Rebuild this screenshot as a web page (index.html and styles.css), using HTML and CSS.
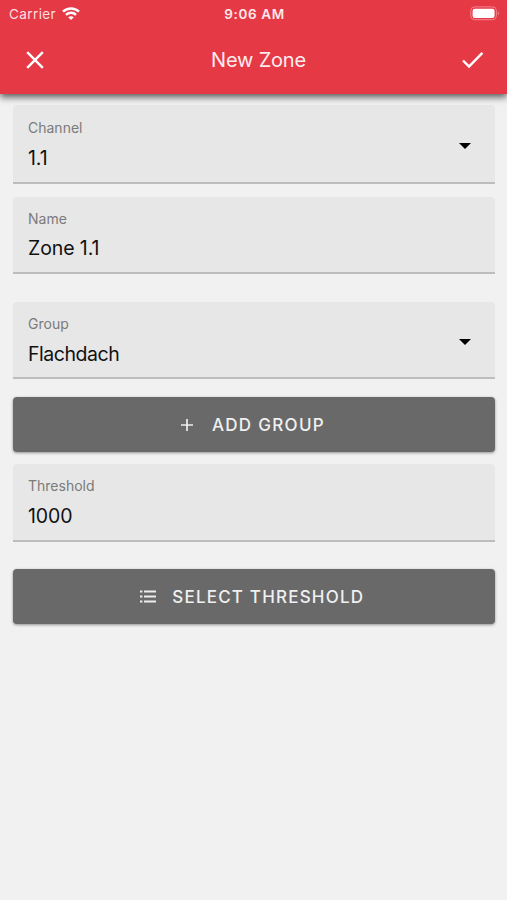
FILE: index.html
```html
<!DOCTYPE html>
<html lang="en">
<head>
<meta charset="utf-8">
<title>New Zone</title>
<link rel="stylesheet" href="styles.css">
</head>
<body>
<header class="header">
  <div class="status">
    <div class="carrier"><span>Carrier</span>
      <svg width="18" height="14" viewBox="0 0 18 14" fill="none" stroke="#fff" stroke-width="2.5"><path d="M1 4.6C5.5.3 12.5.3 17 4.6M4 7.8c2.8-2.7 7.2-2.7 10 0"/><path d="M9 13 6.2 10.3q2.8-2.3 5.6 0z" fill="#fff" stroke="none"/></svg>
    </div>
    <span class="time">9:06 AM</span>
    <svg class="battery" width="30" height="15" viewBox="0 0 30 15"><rect x=".8" y=".9" width="25.6" height="12.8" rx="3.8" fill="none" stroke="#f2858f"/><rect x="2.6" y="2.7" width="22" height="9.2" rx="2.2" fill="#fff"/><path d="M27.8 5.2q2.4 2.1 0 4.2z" fill="#f2858f"/></svg>
  </div>
  <div class="toolbar">
    <svg width="18" height="18" viewBox="0 0 18 18" fill="none" stroke="#fff" stroke-width="2.4"><path d="m1.2 1.2 15.6 15.6m0-15.6L1.2 16.8"/></svg>
    <h1 class="title">New Zone</h1>
    <svg width="22" height="18" viewBox="0 0 22 18" fill="none" stroke="#fff" stroke-width="2.4"><path d="m1 9.5 6 6L20.4 1.8"/></svg>
  </div>
</header>
<main class="form">
  <div class="field channel">
    <div class="text"><span class="label">Channel</span><span class="value">1.1</span></div>
    <svg class="arrow" width="12" height="6" viewBox="0 0 12 6"><path d="M0 0h12L6 6z"/></svg>
  </div>
  <div class="field name">
    <div class="text"><span class="label">Name</span><span class="value">Zone 1.1</span></div>
  </div>
  <div class="field group">
    <div class="text"><span class="label">Group</span><span class="value tight">Flachdach</span></div>
    <svg class="arrow" width="12" height="6" viewBox="0 0 12 6"><path d="M0 0h12L6 6z"/></svg>
  </div>
  <button class="button add">
    <svg width="12" height="12" viewBox="0 0 12 12" stroke="#eee" stroke-width="1.7"><path d="M6 0v12M0 6h12"/></svg>
    <span>ADD GROUP</span>
  </button>
  <div class="field threshold">
    <div class="text"><span class="label">Threshold</span><span class="value">1000</span></div>
  </div>
  <button class="button select">
    <svg width="16" height="13" viewBox="0 0 16 13" stroke="#eee" stroke-width="1.9"><path d="M0 1.5h2.4M4 1.5h12M0 6.5h2.4M4 6.5h12M0 11.5h2.4M4 11.5h12"/></svg>
    <span>SELECT THRESHOLD</span>
  </button>
</main>
</body>
</html>
```
FILE: styles.css
```css
* { box-sizing: border-box; }
body {
  margin: 0;
  height: 900px;
  background: #f1f1f1;
  font-family: Inter, "Liberation Sans", sans-serif;
  overflow: hidden;
}
svg { display: block; flex: none; }
.header {
  position: relative;
  z-index: 1;
  height: 94px;
  background: #e63946;
  color: #fff;
  box-shadow: 0 3px 7px rgba(0, 0, 0, .65);
}
.status {
  display: grid;
  grid-template-columns: 1fr auto 1fr;
  align-items: center;
  height: 27px;
  padding: 0 7px 0 9px;
  font-size: 13.5px;
}
.carrier { display: flex; align-items: center; gap: 6px; color: #fbdfe1; letter-spacing: .4px; }
.time { font-weight: 600; font-size: 13.5px; letter-spacing: .65px; color: #fde9ea; }
.battery { justify-self: end; }
.toolbar {
  display: grid;
  grid-template-columns: 18px 1fr 22px;
  align-items: center;
  height: 66px;
  padding: 0 23px 0 26px;
}
.title {
  margin: 0;
  padding-left: 11px;
  text-align: center;
  font-size: 20px;
  font-weight: 400;
  letter-spacing: -.2px;
  color: #fdecee;
}
.form { display: flex; flex-direction: column; padding: 11px 12.5px 0 13px; }
.field {
  display: flex;
  align-items: center;
  justify-content: space-between;
  height: 77px;
  padding: 0 23.5px 0 15px;
  background: #e7e7e7;
  border-bottom: 2px solid #bdbdbd;
  border-radius: 4px 4px 0 0;
}
.text { display: flex; flex-direction: column; align-self: flex-start; padding-top: 12px; }
.label { font-size: 14px; line-height: 20px; color: #7b7b7b; }
.value { font-size: 19.5px; line-height: 26px; margin-top: 7px; color: #111; letter-spacing: -.1px; }
.tight { letter-spacing: -.45px; }
.arrow { margin-top: 4px; }
.channel { height: 79px; }
.channel .text { padding-top: 13px; }
.name { margin-top: 13px; }
.name .text { padding-top: 12px; }
.name .value { margin-top: 6px; }
.group { margin-top: 28px; }
.threshold { margin-top: 12px; height: 78px; }
.button {
  display: flex;
  align-items: center;
  justify-content: center;
  height: 55px;
  padding: 0;
  border: 0;
  border-radius: 4px;
  background: #696969;
  color: #f0f0f0;
  font: 500 17px Inter, "Liberation Sans", sans-serif;
  letter-spacing: 1.3px;
  box-shadow: 0 1px 3px rgba(0, 0, 0, .4);
}
.add { margin-top: 18px; gap: 18.5px; padding-right: 1px; }
.select { margin-top: 27px; gap: 16px; letter-spacing: 1.2px; padding-right: 3px; }
```
